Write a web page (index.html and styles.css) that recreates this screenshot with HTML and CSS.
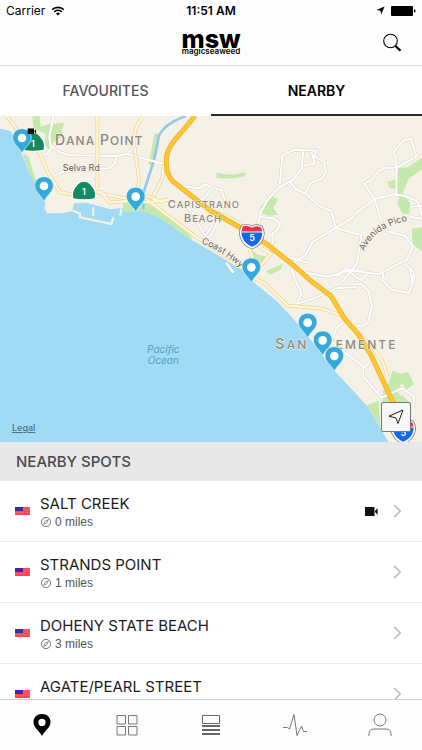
FILE: index.html
```html
<!DOCTYPE html>
<html lang="en">
<head>
    <meta charset="UTF-8">
    <meta name="viewport" content="width=device-width, initial-scale=1.0">
    <title>Magicseaweed - Nearby</title>
    <link rel="stylesheet" href="styles.css">
</head>
<body>
    <!-- Shared icons -->
    <svg class="sprite" aria-hidden="true">
        <symbol id="pin" viewBox="0 0 60 78">
            <path d="M30 2C13 2 2 14 2 29c0 18 19 28 28 47 9-19 28-29 28-47C58 14 47 2 30 2z" fill="#34aadc" stroke="#e8f6fc" stroke-width="2"/>
            <circle cx="30" cy="30" r="13" fill="#fff"/>
        </symbol>
        <symbol id="flag" viewBox="0 0 15 8">
            <path d="M0 0h15v8H0z" fill="#fb4653"/>
            <path d="M8 1.5h7M8 3.5h7M0 5.5h15" stroke="#ff7480" stroke-width=".5"/>
            <path d="M0 0h8v4H0z" fill="#3b2ba8"/>
        </symbol>
        <symbol id="compass" viewBox="0 0 12 12">
            <circle cx="6" cy="6" r="4.6" fill="none" stroke="#666" stroke-width=".9"/>
            <path d="M8.3 3.7L6.8 6.8 3.7 8.3l1.5-3.1z" fill="none" stroke="#666" stroke-width=".7"/>
        </symbol>
        <symbol id="camera" viewBox="0 0 13 9">
            <path d="M0 0h9.5v9H0zM10 4l2.6-2.8v6.6L10 5z" fill="#111"/>
        </symbol>
        <symbol id="chevron" viewBox="0 0 9 14">
            <path d="M1.2 1l6 6-6 6" fill="none" stroke="#b8b8bd" stroke-width="1.6"/>
        </symbol>
    </svg>

    <div class="app">
        <header class="header">
            <div class="status-bar">
                <span class="carrier">Carrier
                    <svg width="14" height="10" viewBox="0 0 14 10" fill="none" stroke="#000" stroke-width="1.7">
                        <path d="M1.2 3.6a8.4 8.4 0 0 1 11.6 0M3.3 5.9a5.4 5.4 0 0 1 7.4 0"/>
                        <path d="M7 9.6L5 7.5a3 3 0 0 1 4 0z" fill="#000" stroke="none"/>
                    </svg>
                </span>
                <span class="clock">11:51 AM</span>
                <span class="status-icons">
                    <svg width="9" height="9" viewBox="0 0 9 9"><path d="M8.6.4L5.2 8.6 4.5 4.7.4 4.1z"/></svg>
                    <svg width="26" height="10" viewBox="0 0 26 10"><rect x="1" width="22" height="10" rx="1"/><path d="M24 3.2q1.6 0 1.6 1.8T24 6.8z"/></svg>
                </span>
            </div>
            <div class="nav-bar">
                <h1 class="logo">
                    <span class="logo-mark">msw</span>
                    <span class="logo-name">magicseaweed</span>
                </h1>
                <button class="search" type="button" aria-label="Search">
                    <svg width="20" height="20" viewBox="0 0 20 20" fill="none" stroke="#000">
                        <circle cx="8.5" cy="8" r="6.8" stroke-width="1.1"/>
                        <path d="M13 12.5l5.5 5.3" stroke-width="2.2"/>
                    </svg>
                </button>
            </div>
        </header>

        <nav class="tabs">
            <a href="#favourites">FAVOURITES</a>
            <a href="#nearby" class="active">NEARBY</a>
        </nav>

        <section class="map">
            <svg class="map-canvas" viewBox="0 0 1266 978" preserveAspectRatio="xMidYMid slice" role="img" aria-label="Map of nearby spots">
                <path class="sea" d="M0 0h1266v978H0z"/>
                <path class="land" d="M0 0V38L32 45 52 85 72 130 85 165 115 210 136 255 134 278 142 292 185 292 217 285 222 262 260 260 330 280 368 275 430 282 480 305 530 340 575 372 633 405 723 460 763 500 833 557 883 612 933 672 1003 764 1053 817 1103 872 1133 922 1165 978H1266V0z"/>

                <!-- Parks -->
                <g class="park">
                    <path d="M97 0h22l3 32 25-8 48-4-10 20 3 22-28 18-13 20-16-15 8-30-38-18z"/>
                    <path d="M68 112l18 10 20 65 22 36 5 33-22-45-26-45z"/>
                    <path d="M464 52l12 2-8 60-11 38-12-8z"/>
                    <path d="M370 262l70 0 40 22 60 45 35 35v10l-48-35-50-34-50-19-57 2z"/>
                    <path d="M650 170q45 12 85-2l2 12q-42 12-88 5z"/>
                    <path d="M812 239l22 10-14 27 14 20-30 3-21-8-2-18z"/>
                    <path d="M748 393l22 22 25 5-4 18-27 4-12-26zM796 466l54-23-8 18-31 15z"/>
                    <path d="M1266 124l-42 30-32 2-5 32-25 10 6 17 20 5 10 25-6 18 16 30 20 2 2-35-22-28 18-44 40-28z"/>
                    <path d="M1235 338l31-4v73l-28-24z"/>
                    <path d="M1178 764l24 9 22-5 18 36-22 17-15-20-12 27 12 20-30-2-14-32z"/>
                    <path d="M1100 867l35-13 8 90-9-23z"/>
                    <path d="M1150 822l60 18 18 20v30h-84z"/>
                </g>

                <!-- Water: river and harbour -->
                <path class="river" d="M558 0Q495 22 476 60 468 120 450 170L432 225 430 280"/>
                <path class="harbour" d="M222 268l16-6 40 12 3 20-46-10zM284 277l56 11-6 25-52-14z"/>
                <path class="harbour-edge" d="M218 284l22 8 0 12 94 20 6-20M280 274v26M364 277l-3 22"/>

                <!-- Minor roads -->
                <g class="road-case">
                    <path id="minor-a" d="M160 0L155 30 148 60 152 90 178 108 210 118 350 120 380 114 490 143M157 92L140 115 110 120M165 178l24-11 138-10 16-12 8-22M380 114l14-12 10-20"/>
                    <path id="minor-b" d="M775 325l7-37 21-37 36-38 38-20 28-35 5-54M839 205l3-27 5-60 38-17 65 3-7 18 29 15 6 30-13 21-34 13-14 32M910 150l34-8-9-34M868 196l20 23 32 16 34 33 40 17 14 52 76 21-13 85-45 55M782 303l38 4 21 15-8 20-16 10 1 30-15 15 58 25 60 18"/>
                    <path id="minor-c" d="M886 436l30-18 22-40 66-40 50-30 12-16 57-42 60-15 32 5 38 17 13 42M1123 248l-30-45 24-12 18-26 26-10 28 0 0-28-9-17 32-38 21-3 10 32 7 20-59 34-2 22 0 65M1123 248l21 66 17 32 56 14 22 32-19 40-17 8-68 35-80-12-23-6M1230 302l36 6M1230 272l36-2"/>
                    <path id="minor-d" d="M886 436l-10 28 10 28 19 40-20 45M918 470l65 12 60-17 40 27 20-20M888 565l60-20 60-28 60-4M1012 480l15-15 60-2M1050 505l35 0 20 20 11 45-12 50-18 12-20-5M1150 468l-3 25 30 28 50 10 10-30-6-40M1216 445l25 22v30M1030 620l-20 15-15 40 40 35 60 45 12-16M1090 748v35l55 62 60-28 38 25-4 35M700 470l-22-30"/>
                    <path id="minor-e" d="M540 210l25 2 30 5 20-12 18 8M560 240l50 10 23-30M640 215l25 8 10 30-15 50-30 60M560 270l20 25 15 30 20 35 18-25"/>
                </g>
                <g class="road">
                    <use href="#minor-a"/><use href="#minor-b"/><use href="#minor-c"/><use href="#minor-d"/><use href="#minor-e"/>
                </g>

                <!-- Main roads -->
                <g class="main-case">
                    <path id="main-a" d="M20 0l22 28 30 42 46 38 24 58 37 62 34 7 70-10 40 12 55 10 62 12 70-8M292 0v215M430 0l-20 30-10 40 10 70 8 50-10 50M490 145l-2 40-28 56M300 225l30 35 55-5 15-12"/>
                    <path id="main-b" d="M440 250l38 30 60 45 46 35 60 39 60 37 50 45 40 22 70 66 100 8 70 25M440 240l50 20M650 290l40 15 33 20M763 382l50 32-30 34-20-6-20-60M1075 655l40 34 35 52 12 40"/>
                </g>
                <g class="main">
                    <use href="#main-a"/><use href="#main-b"/>
                </g>

                <!-- Interstate 5 -->
                <g class="freeway-case">
                    <path id="freeway" d="M585 0L540 54Q505 90 500 120 494 170 518 196L570 236 633 285 723 336 800 384 883 450 933 495 993 540 1033 607 1073 652 1113 717 1148 792 1178 857 1215 978"/>
                </g>
                <use href="#freeway" class="freeway"/>

                <!-- Place names -->
                <g class="place">
                    <text x="165" y="87" font-size="42">D<tspan font-size="36">ANA</tspan> P<tspan font-size="36">OINT</tspan></text>
                    <text x="503" y="276" font-size="33">C<tspan font-size="28">APISTRANO</tspan></text>
                    <text x="552" y="318" font-size="33">B<tspan font-size="28">EACH</tspan></text>
                    <text class="city" x="825" y="699" font-size="45">S<tspan font-size="36">AN</tspan></text>
                    <text class="city" x="942" y="699" font-size="45">C<tspan font-size="36">LEMENTE</tspan></text>
                </g>
                <g class="street">
                    <path id="coast-hwy" d="M604 382Q665 404 730 462" fill="none" stroke="none"/>
                    <path id="avenida-pico" d="M1092 405Q1125 335 1215 316" fill="none" stroke="none"/>
                    <text x="188" y="165">Selva Rd</text>
                    <text><textPath href="#coast-hwy">Coast Hwy</textPath></text>
                    <text><textPath href="#avenida-pico">Avenida Pico</textPath></text>
                </g>
                <g class="ocean">
                    <text x="490" y="710">Pacific</text>
                    <text x="490" y="743">Ocean</text>
                </g>

                <!-- Road shields -->
                <g class="state-shield">
                    <path id="state" d="M252 195c16 0 20 9 27 18 9 11 9 25 6 36q-33 6-66 0c-3-11-3-25 6-36 7-9 11-18 27-18z"/>
                    <use href="#state" x="-153" y="-146"/>
                    <text x="252" y="238">1</text>
                    <text x="99" y="92">1</text>
                </g>
                <g id="interstate">
                    <path d="M728 330q14-5 28 4 14-9 28 0c12 20 2 50-28 61-30-11-42-42-28-65z" fill="#1767ec" stroke="#646b8c" stroke-width="9"/>
                    <path d="M728 330q14-5 28 4 14-9 28 0c12 20 2 50-28 61-30-11-42-42-28-65z" fill="#1767ec" stroke="#fff" stroke-width="5"/>
                    <path d="M728 331q14-5 28 4 14-9 28 0l3 13h-62z" fill="#ee3344"/>
                    <path d="M724 348h64" stroke="#fff" stroke-width="3"/>
                    <text class="shield-number" x="756" y="375">5</text>
                </g>
                <use href="#interstate" x="454" y="585"/>

                <!-- Spots -->
                <use href="#pin" x="36" y="36" width="60" height="78"/>
                <use href="#camera" x="81" y="37" width="30" height="18"/>
                <use href="#pin" x="102" y="180" width="60" height="78"/>
                <use href="#pin" x="377" y="212" width="60" height="78"/>
                <use href="#pin" x="724" y="424" width="60" height="78"/>
                <use href="#pin" x="893" y="590" width="60" height="78"/>
                <use href="#pin" x="938" y="643" width="60" height="78"/>
                <use href="#pin" x="973" y="690" width="60" height="78"/>
            </svg>
            <a class="legal" href="#legal">Legal</a>
            <button class="locate" type="button" aria-label="Show my location">
                <svg width="16" height="16" viewBox="0 0 16 16"><path d="M15 1L10 14.5 8 9 1 7.2z" fill="none" stroke="#222"/></svg>
            </button>
        </section>

        <main class="spots">
            <h2>NEARBY SPOTS</h2>
            <ul>
                <li>
                    <a class="spot" href="#salt-creek">
                        <svg class="flag"><use href="#flag"/></svg>
                        <span class="info">
                            <span class="name">SALT CREEK</span>
                            <span class="distance"><svg class="compass"><use href="#compass"/></svg>0 miles</span>
                        </span>
                        <svg class="camera"><use href="#camera"/></svg>
                        <svg class="chevron"><use href="#chevron"/></svg>
                    </a>
                </li>
                <li>
                    <a class="spot" href="#strands-point">
                        <svg class="flag"><use href="#flag"/></svg>
                        <span class="info">
                            <span class="name">STRANDS POINT</span>
                            <span class="distance"><svg class="compass"><use href="#compass"/></svg>1 miles</span>
                        </span>
                        <svg class="chevron"><use href="#chevron"/></svg>
                    </a>
                </li>
                <li>
                    <a class="spot" href="#doheny">
                        <svg class="flag"><use href="#flag"/></svg>
                        <span class="info">
                            <span class="name">DOHENY STATE BEACH</span>
                            <span class="distance"><svg class="compass"><use href="#compass"/></svg>3 miles</span>
                        </span>
                        <svg class="chevron"><use href="#chevron"/></svg>
                    </a>
                </li>
                <li>
                    <a class="spot" href="#agate">
                        <svg class="flag"><use href="#flag"/></svg>
                        <span class="info">
                            <span class="name">AGATE/PEARL STREET</span>
                        </span>
                        <svg class="chevron"><use href="#chevron"/></svg>
                    </a>
                </li>
            </ul>
        </main>

        <nav class="tab-bar">
            <a href="#spots" aria-label="Spots">
                <svg width="24" height="24" viewBox="0 0 24 24"><path d="M12 1C7 1 3.5 4.500 3.500 9c0 5.500 5.500 8.500 8.500 14 3-5.500 8.500-8.500 8.500-14C20.500 4.500 17 1 12 1zm0 4.800a3.600 3.600 0 1 1 0 7.200 3.600 3.600 0 0 1 0-7.200z"/></svg>
            </a>
            <a href="#grid" aria-label="Grid">
                <svg width="24" height="24" viewBox="0 0 24 24" fill="none" stroke="#777"><path d="M2 2.500h8.500v8.500H2zM13.500 2.500H22v8.500h-8.500zM2 13.500h8.500V22H2zM13.500 13.500H22V22h-8.500z"/></svg>
            </a>
            <a href="#news" aria-label="News">
                <svg width="24" height="24" viewBox="0 0 24 24" fill="none" stroke="#666"><path d="M3.500 2.500h17V10.500h-17z"/><path d="M3 13h18M3 17h18M3 21h18" stroke-width="2"/></svg>
            </a>
            <a href="#activity" aria-label="Activity">
                <svg width="24" height="24" viewBox="0 0 24 24" fill="none" stroke="#777" stroke-linejoin="round"><path d="M0 14.500h4.500l2 1.500L11 1.500l3 21 4.500-9.500 2 5.500H24"/></svg>
            </a>
            <a href="#profile" aria-label="Profile">
                <svg width="24" height="24" viewBox="0 0 24 24" fill="none" stroke="#777"><circle cx="12" cy="7" r="6"/><path d="M1 23v-2q0-5 5-5h12q5 0 5 5v2"/></svg>
            </a>
        </nav>
    </div>
</body>
</html>
```

FILE: styles.css
```css
/* General Styles */
* {
    box-sizing: border-box;
}
body {
    margin: 0;
    font-family: 'Inter', 'Liberation Sans', sans-serif;
    background: #fff;
    color: #1c1c1e;
}
a {
    color: inherit;
    text-decoration: none;
}
button {
    padding: 0;
    border: none;
    background: none;
    cursor: pointer;
}
svg {
    display: block;
}
.sprite {
    position: absolute;
    width: 0;
    height: 0;
}
.app {
    display: flex;
    flex-direction: column;
    height: 100vh;
}

/* Header Styles */
.header {
    flex: none;
    border-bottom: 1px solid #d8d8d8;
    background: #fefefe;
}
.status-bar {
    display: grid;
    grid-template-columns: 1fr auto 1fr;
    align-items: center;
    height: 21px;
    padding: 0 6px;
    font-size: 12px;
    color: #000;
}
.carrier {
    display: flex;
    align-items: center;
    gap: 6px;
}
.clock {
    font-weight: 600;
}
.status-icons {
    display: flex;
    align-items: center;
    justify-content: flex-end;
    gap: 5px;
}
.nav-bar {
    display: grid;
    grid-template-columns: 1fr auto 1fr;
    align-items: center;
    height: 44px;
    padding: 0 20px;
}
.logo {
    display: flex;
    flex-direction: column;
    align-items: center;
    grid-column: 2;
    margin: 0;
    color: #000;
}
.logo-mark {
    font-size: 25px;
    font-weight: 800;
    line-height: 16px;
}
.logo-name {
    font-size: 8px;
    font-weight: 600;
    line-height: 8px;
}
.search {
    justify-self: end;
}

/* Tabs */
.tabs {
    display: flex;
    flex: none;
}
.tabs a {
    flex: 1;
    padding: 16px 0 14px;
    border-bottom: 2px solid #fff;
    font-size: 14px;
    font-weight: 500;
    line-height: 18px;
    text-align: center;
    color: #555;
}
.tabs a.active {
    border-color: #2c2c34;
    font-weight: 600;
    color: #000;
}

/* Map */
.map {
    position: relative;
    flex: none;
    aspect-ratio: 422 / 326;
    max-height: 60vh;
}
.map-canvas {
    width: 100%;
    height: 100%;
}
.sea,
.harbour {
    fill: #a0daf4;
}
.land {
    fill: #f6f1e7;
}
.park {
    fill: #c5e8ac;
}
.river {
    fill: none;
    stroke: #8fcbe8;
    stroke-width: 8;
}
.harbour-edge {
    fill: none;
    stroke: #f6f1e7;
    stroke-width: 7;
}
.road-case,
.road,
.main-case,
.main,
.freeway-case,
.freeway {
    fill: none;
    stroke-linejoin: round;
}
.road-case {
    stroke: #d6d2cb;
    stroke-width: 9;
}
.road {
    stroke: #fff;
    stroke-width: 6;
}
.main-case {
    stroke: #ecd19a;
    stroke-width: 11;
}
.main {
    stroke: #fff7d5;
    stroke-width: 7;
}
.freeway-case {
    stroke: #e9ad2b;
    stroke-width: 15;
}
.freeway {
    stroke: #fdc62f;
    stroke-width: 11;
}
.place {
    fill: #8b8984;
    stroke: #f6f1e7;
    stroke-width: 3;
    paint-order: stroke;
    font-weight: 500;
    letter-spacing: 3px;
}
.city {
    letter-spacing: 6px;
}
.street {
    fill: #66625d;
    stroke: #f6f1e7;
    stroke-width: 5;
    paint-order: stroke;
    font-size: 27px;
}
.ocean {
    fill: #5b9dbd;
    font-size: 30px;
    font-style: italic;
    text-anchor: middle;
}
.state-shield {
    fill: #138a60;
    stroke: #fff;
    stroke-width: 4;
}
.state-shield text,
.shield-number {
    fill: #fff;
    stroke: none;
    font-size: 27px;
    font-weight: 600;
    text-anchor: middle;
}
.legal {
    position: absolute;
    bottom: 8px;
    left: 12px;
    font-size: 9px;
    font-weight: 500;
    line-height: 12px;
    text-decoration: underline;
    color: #4c7387;
}
.locate {
    position: absolute;
    right: 11px;
    bottom: 10px;
    display: grid;
    place-items: center;
    width: 30px;
    height: 30px;
    border: 1px solid #777;
    border-radius: 2px;
    background: #f7f7f7;
}

/* Spot List */
.spots {
    flex: 1;
    min-height: 0;
    overflow-y: auto;
    scrollbar-width: none;
}
.spots h2 {
    margin: 0;
    padding: 10px 16px;
    background: #e8e8e8;
    font-size: 15px;
    font-weight: 500;
    line-height: 19px;
    color: #4a4a50;
}
.spots ul {
    list-style-type: none;
    margin: 0;
    padding: 0;
}
.spot {
    display: flex;
    align-items: center;
    min-height: 61px;
    padding: 0 20px 0 15px;
    border-bottom: 1px solid #ededed;
}
.flag {
    width: 15px;
    height: 8px;
}
.info {
    flex: 1;
    align-self: flex-start;
    padding: 13px 0 0 10px;
}
.name {
    display: block;
    font-size: 15px;
    line-height: 20px;
}
.distance {
    display: flex;
    align-items: center;
    gap: 3px;
    font-family: 'Liberation Sans', sans-serif;
    font-size: 12px;
    line-height: 16px;
    color: #555;
}
.compass {
    width: 12px;
    height: 12px;
}
.camera {
    width: 13px;
    height: 9px;
    margin-right: 15px;
}
.chevron {
    width: 9px;
    height: 14px;
}

/* Bottom Tab Bar */
.tab-bar {
    display: flex;
    flex: none;
    border-top: 1px solid #d0d0d0;
    background: #fdfdfd;
}
.tab-bar a {
    display: flex;
    flex: 1;
    justify-content: center;
    padding: 13px 0;
}
```
